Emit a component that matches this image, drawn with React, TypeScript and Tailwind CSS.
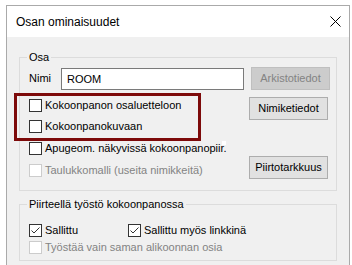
import React from 'react';

function CheckBox({ checked = false, disabled = false }: { checked?: boolean; disabled?: boolean }) {
  return (
    <div
      className={`w-[13px] h-[13px] shrink-0 border bg-white flex items-center justify-center ${
        disabled ? 'border-[#cccccc]' : 'border-[#333333]'
      }`}
    >
      {checked && (
        <svg width="11" height="11" viewBox="0 0 11 11">
          <polyline points="1.5,5.5 4,8 9.5,2.5" fill="none" stroke="#333" strokeWidth="1" />
        </svg>
      )}
    </div>
  );
}

function CheckRow({ label, checked, disabled, className = '' }: { label: string; checked?: boolean; disabled?: boolean; className?: string }) {
  return (
    <div className={`flex items-center h-[13px] gap-[3px] ${className}`}>
      <CheckBox checked={checked} disabled={disabled} />
      <span className={`whitespace-nowrap leading-[13px] ${disabled ? 'text-[#838383]' : 'text-black'}`}>{label}</span>
    </div>
  );
}

function Button({ label, disabled = false, className = '' }: { label: string; disabled?: boolean; className?: string }) {
  return (
    <div
      className={`w-[79px] h-[23px] border flex items-center justify-center ${
        disabled ? 'bg-[#cccccc] border-[#bfbfbf] text-[#838383]' : 'bg-[#e1e1e1] border-[#adadad] text-black'
      } ${className}`}
    >
      {label}
    </div>
  );
}

export default function App() {
  return (
    <div
      className="relative w-[352px] h-[265px] bg-white overflow-hidden pt-[5px] pl-[6px] text-[11px]"
      style={{ fontFamily: '"Liberation Sans", Arial, sans-serif' }}
    >
      <div className="w-[344px] h-[260px] border border-b-0 border-[#aaaaaa] flex flex-col">
        {/* title bar */}
        <div className="h-[31px] bg-white flex items-center justify-between pl-[9px] pr-[8px]">
          <span className="text-[12px] text-black">Osan ominaisuudet</span>
          <svg width="11" height="11" viewBox="0 0 11 11">
            <path d="M0.5 0.5 L10.5 10.5 M10.5 0.5 L0.5 10.5" stroke="#000" strokeWidth="1" />
          </svg>
        </div>

        {/* body */}
        <div className="flex-1 bg-[#f0f0f0] px-[12px] pt-[20px]">
          {/* Osa */}
          <div className="h-[134px] border border-[#dcdcdc] flex flex-col">
            <div className="-mt-[8px] ml-[7px] px-[2px] w-fit bg-[#f0f0f0] leading-[14px] text-black">Osa</div>
            <div className="flex items-start mt-[3px] pl-[9px]">
              <span className="w-[32px] leading-[23px] text-black">Nimi</span>
              <div className="w-[183px] h-[22px] mt-[1px] bg-white border border-[#7a7a7a] flex items-center pl-[5px] text-black">
                ROOM
              </div>
              <Button label="Arkistotiedot" disabled className="ml-[7px]" />
            </div>
            <div className="flex justify-between pl-[9px] pr-[8px]">
              <div className="flex flex-col">
                <CheckRow label="Kokoonpanon osaluetteloon" className="mt-[9px]" />
                <CheckRow label="Kokoonpanokuvaan" className="mt-[8px]" />
                <CheckRow label="Apugeom. näkyvissä kokoonpanopiir." className="mt-[9px]" />
                <CheckRow label="Taulukkomalli (useita nimikkeitä)" disabled className="mt-[9px]" />
              </div>
              <div className="flex flex-col">
                <Button label="Nimiketiedot" className="mt-[7px]" />
                <Button label="Piirtotarkkuus" className="mt-[36px]" />
              </div>
            </div>
          </div>

          {/* Piirteellä työstö */}
          <div className="h-[57px] mt-[13px] border border-[#dcdcdc] flex flex-col">
            <div className="-mt-[8px] ml-[7px] px-[2px] w-fit bg-[#f0f0f0] leading-[14px] text-black">
              Piirteellä työstö kokoonpanossa
            </div>
            <div className="flex pl-[9px] mt-[13px]">
              <CheckRow label="Sallittu" checked className="w-[99px]" />
              <CheckRow label="Sallittu myös linkkinä" checked />
            </div>
            <CheckRow label="Työstää vain saman alikoonnan osia" disabled className="ml-[9px] mt-[4px]" />
          </div>
        </div>
      </div>

      {/* annotation */}
      <div className="absolute left-[14px] top-[93px] w-[187px] h-[48px] border-[3px] border-[#7d0a0a]" />
      <div className="absolute left-[222px] top-[141px] w-[4px] h-[4px] bg-white" />
    </div>
  );
}
